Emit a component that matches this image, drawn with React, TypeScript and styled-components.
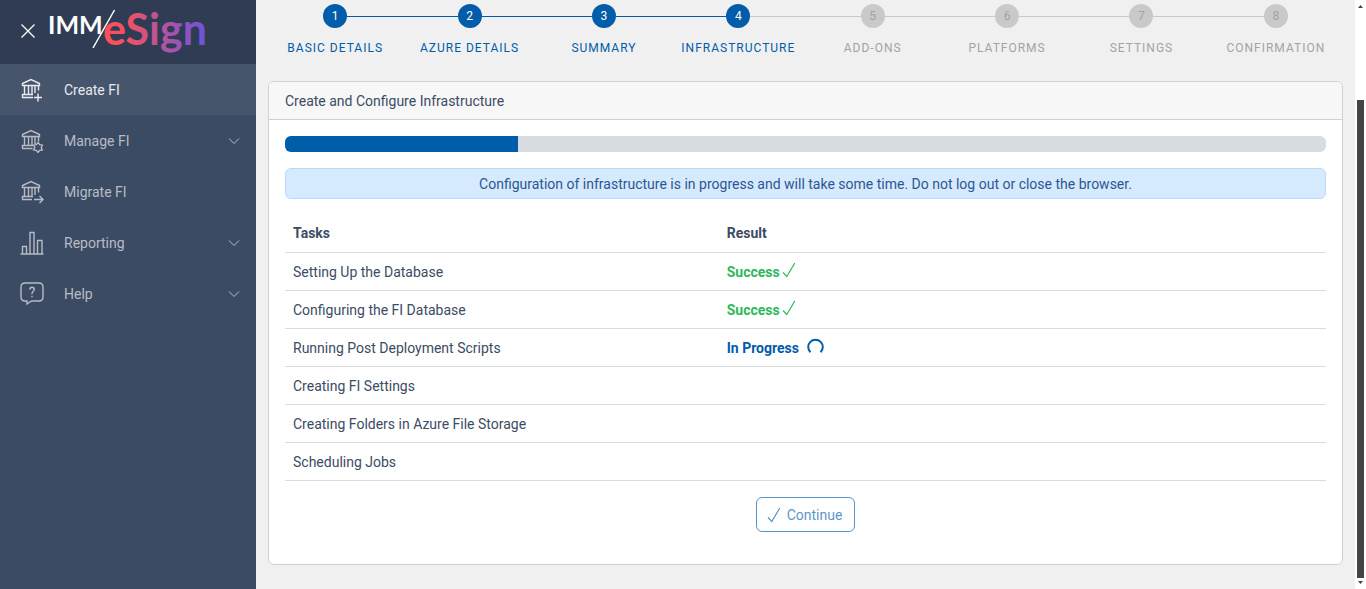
import React from "react";
import styled, { createGlobalStyle, css } from "styled-components";

const GlobalStyle = createGlobalStyle`
  *, *::before, *::after { box-sizing: border-box; }
  body {
    margin: 0;
    background: #f0f0f0;
    color: #3c4b64;
    font-family: Roboto, "Liberation Sans", sans-serif;
    font-size: 14px;
    line-height: 21px;
  }
`;

const Page = styled.div`
  display: flex;
  min-height: 100vh;
`;

const Sidebar = styled.aside`
  flex: 0 0 256px;
  background: #3c4b64;
`;

const Brand = styled.header`
  display: flex;
  align-items: center;
  gap: 12px;
  height: 64px;
  padding-left: 20px;
  background: #303c54;
`;

const CloseButton = styled.button`
  display: flex;
  padding: 0 0 2px;
  border: 0;
  background: none;
  color: #fff;
`;

const Logo = styled.a`
  display: flex;
  text-decoration: none;
`;

const NavItem = styled.a<{ $active?: boolean }>`
  display: flex;
  align-items: center;
  gap: 20px;
  height: 51px;
  padding: 0 16px 0 20px;
  color: ${(p) => (p.$active ? "#e9ebee" : "#b7bcc5")};
  background: ${(p) => (p.$active ? "#46546c" : "transparent")};
  text-decoration: none;
`;

const NavLabel = styled.span`
  flex: 1;
  padding-top: 2px;
`;

const Main = styled.main`
  flex: 1;
  min-width: 0;
  padding: 4px 12px 24px;
`;

const Steps = styled.ol`
  display: flex;
  margin: 0 0 22px;
  padding: 0;
  list-style: none;
`;

const Step = styled.li<{ $done: boolean; $first: boolean }>`
  flex: 1 1 0;
  display: grid;
  grid-template-columns: 1fr 24px 1fr;
  align-items: center;
  row-gap: 10px;
  color: ${(p) => (p.$done ? "#015ca9" : "#a3a3a3")};

  &::before,
  &::after {
    content: "";
    grid-row: 1;
    height: 1px;
    background: ${(p) => (p.$done ? "#015ca9" : "#c9c9c9")};
  }
  &::before {
    grid-column: 1;
    ${(p) => p.$first && css`visibility: hidden;`}
  }
  &::after {
    grid-column: 3;
  }
  &[aria-current="step"]::after {
    background: #c9c9c9;
  }
  &:last-child::after {
    visibility: hidden;
  }
`;

const StepNumber = styled.span<{ $done: boolean }>`
  grid-row: 1;
  grid-column: 2;
  height: 24px;
  border-radius: 50%;
  background: ${(p) => (p.$done ? "#015ca9" : "#c9c9c9")};
  color: ${(p) => (p.$done ? "#fff" : "#a3a3a3")};
  font-size: 12px;
  line-height: 24px;
  text-align: center;
`;

const StepLabel = styled.span`
  grid-row: 2;
  grid-column: 1 / -1;
  font-size: 12px;
  letter-spacing: 1px;
  text-align: center;
  text-transform: uppercase;
  white-space: nowrap;
`;

const Card = styled.section`
  border: 1px solid #ced2d8;
  border-radius: 6px;
  background: #fff;
`;

const CardTitle = styled.h1`
  margin: 0;
  padding: 9px 16px 7px;
  border-bottom: 1px solid #ced2d8;
  border-radius: 5px 5px 0 0;
  background: #f7f7f7;
  font-size: 14px;
  font-weight: 400;
`;

const CardBody = styled.div`
  padding: 16px 16px 32px;
`;

const Track = styled.div`
  height: 16px;
  overflow: hidden;
  border-radius: 6px;
  background: #d8dbe0;
`;

const Fill = styled.div`
  height: 100%;
  background: #015ca9;
`;

const Notice = styled.p`
  margin: 16px 0;
  padding: 5px 16px 3px;
  border: 1px solid #b8daff;
  border-radius: 6px;
  background: #d6eaff;
  color: #2c5691;
  text-align: center;
`;

const Table = styled.table`
  width: 100%;
  border-collapse: separate;
  border-spacing: 0;
  table-layout: fixed;
`;

const cell = css`
  height: 38px;
  border-bottom: 1px solid #d8dbe0;
  text-align: left;
`;

const HeadCell = styled.th`
  ${cell}
  padding: 0 8px;
  font-weight: 700;
  &:first-child { width: calc(100% * 5 / 12); }
`;

const Cell = styled.td`
  ${cell}
  padding: 2px 8px 0;
`;

const Status = styled.span<{ $running?: boolean }>`
  display: flex;
  align-items: flex-start;
  gap: ${(p) => (p.$running ? "8px" : "2px")};
  color: ${(p) => (p.$running ? "#015ca9" : "#2eb85c")};
  font-weight: 700;
`;

const Actions = styled.div`
  display: flex;
  justify-content: center;
  padding-top: 16px;
`;

const ContinueButton = styled.button`
  display: flex;
  align-items: center;
  gap: 6px;
  height: 35px;
  padding: 1px 12px 0 10px;
  border: 1px solid #015ca9;
  border-radius: 6px;
  background: #fff;
  color: #015ca9;
  font: inherit;
  opacity: 0.65;
`;

const ScrollBar = styled.div`
  display: flex;
  flex: 0 0 11px;
  flex-direction: column;
  align-items: center;
  justify-content: space-between;
  padding: 5px 0;
  background: #fff;
  color: #444;
`;

const ScrollThumb = styled.div`
  width: 7px;
  flex: 1;
  margin: 92px 0 3px;
  background: #444;
`;

const Check = () => (
  <svg width="14" height="16" viewBox="0 0 14 16" fill="none" stroke="currentColor" strokeWidth="1.2" aria-hidden="true">
    <path d="M1 10.5 4.8 14.5 12.8 1" />
  </svg>
);

const Spinner = () => (
  <svg width="17" height="17" viewBox="0 0 17 17" fill="none" stroke="currentColor" strokeWidth="2" aria-hidden="true">
    <path d="M3.4 14.2A7.3 7.3 0 1 1 13.6 14.2" />
  </svg>
);

const Chevron = () => (
  <svg width="12" height="8" viewBox="0 0 12 8" fill="none" stroke="currentColor" aria-hidden="true">
    <path d="M1 1.5 6 6.5 11 1.5" />
  </svg>
);

type IconName = "create" | "manage" | "migrate" | "reporting" | "help";

const BankShape = () => (
  <path d="M2.5 7.5V5.5L11 1.5 19.5 5.5V7.5ZM4.5 7.5V16.5M8.500 7.5V16.5M12 7.5V16.5M15 7.5V15M18.500 7.5V12.5M2.5 19.5V16.5H13" />
);

const NavIcon = ({ name }: { name: IconName }) => (
  <svg width="24" height="24" viewBox="0 0 24 24" fill="none" stroke="currentColor" strokeWidth="1.4" aria-hidden="true">
    {name === "create" && (
      <>
        <BankShape />
        <path d="M2 19.5H13M14 19.5H22M18 15.500V23.5" />
      </>
    )}
    {name === "manage" && (
      <>
        <BankShape />
        <path d="M2 19.5H12.5" />
        <path d="M18 13.5 19.7 15.6 22.3 16 21.3 18.5 22.3 21 19.7 21.4 18 23.5 16.3 21.4 13.7 21 14.7 18.5 13.7 16 16.3 15.6Z" />
      </>
    )}
    {name === "migrate" && (
      <>
        <BankShape />
        <path d="M2 19.5H12M14 19.5H23M19.5 16 23 19.5 19.5 23" />
      </>
    )}
    {name === "reporting" && (
      <path d="M0.5 23H23.5M2.5 23V15.5H6.5V23M10 23V1.5H14V23M17.5 23V9.5H22V23" />
    )}
    {name === "help" && (
      <>
        <path d="M5 1H19Q23 1 23 5V15Q23 19 19 19H11.5L7 22V19H5Q1 19 1 15V5Q1 1 5 1Z" />
        <path d="M9.8 7.5Q9.9 5.2 12 5.2 14.2 5.3 14.2 7.3 14.2 8.7 13 9.5 12 10.2 12 12M12 13.8V15.2" />
      </>
    )}
  </svg>
);

const BrandMark = () => (
  <svg width="176" height="64" viewBox="0 0 176 64" role="img" aria-label="IMM eSign">
    <defs>
      <linearGradient id="brand" gradientUnits="userSpaceOnUse" x1="56" y1="0" x2="158" y2="0">
        <stop offset="0" stopColor="#ff5058" />
        <stop offset="0.25" stopColor="#ee5165" />
        <stop offset="0.55" stopColor="#b9549c" />
        <stop offset="1" stopColor="#6a54dc" />
      </linearGradient>
    </defs>
    <text x="0" y="34" fill="#fff" fontFamily="Lato, sans-serif" fontWeight="700" fontSize="25">IMM</text>
    <path d="M45 48 66.500 10" stroke="#fff" strokeWidth="1.5" />
    <text x="55" y="45" fill="url(#brand)" fontFamily="Lato, sans-serif" fontWeight="700" fontSize="43">eSign</text>
  </svg>
);

const navItems: { label: string; icon: IconName; expandable?: boolean }[] = [
  { label: "Create FI", icon: "create" },
  { label: "Manage FI", icon: "manage", expandable: true },
  { label: "Migrate FI", icon: "migrate" },
  { label: "Reporting", icon: "reporting", expandable: true },
  { label: "Help", icon: "help", expandable: true },
];

const steps = [
  "Basic Details",
  "Azure Details",
  "Summary",
  "Infrastructure",
  "Add-ons",
  "Platforms",
  "Settings",
  "Confirmation",
];
const currentStep = 4;

const tasks: { name: string; status?: "success" | "running" }[] = [
  { name: "Setting Up the Database", status: "success" },
  { name: "Configuring the FI Database", status: "success" },
  { name: "Running Post Deployment Scripts", status: "running" },
  { name: "Creating FI Settings" },
  { name: "Creating Folders in Azure File Storage" },
  { name: "Scheduling Jobs" },
];

const progress = 22.4;

export default function App() {
  return (
    <>
      <GlobalStyle />
      <Page>
        <Sidebar>
          <Brand>
            <CloseButton type="button" aria-label="Close menu">
              <svg width="16" height="16" viewBox="0 0 16 16" stroke="currentColor" strokeWidth="1.3" aria-hidden="true">
                <path d="M1.5 1.5 14.5 14.5M14.5 1.5 1.5 14.5" />
              </svg>
            </CloseButton>
            <Logo href="#home">
              <BrandMark />
            </Logo>
          </Brand>
          <nav>
            {navItems.map((item, i) => (
              <NavItem key={item.label} href={`#${item.icon}`} $active={i === 0}>
                <NavIcon name={item.icon} />
                <NavLabel>{item.label}</NavLabel>
                {item.expandable && <Chevron />}
              </NavItem>
            ))}
          </nav>
        </Sidebar>
        <Main>
          <Steps>
            {steps.map((label, i) => (
              <Step
                key={label}
                $done={i < currentStep}
                $first={i === 0}
                aria-current={i === currentStep - 1 ? "step" : undefined}
              >
                <StepNumber $done={i < currentStep}>{i + 1}</StepNumber>
                <StepLabel>{label}</StepLabel>
              </Step>
            ))}
          </Steps>
          <Card>
            <CardTitle>Create and Configure Infrastructure</CardTitle>
            <CardBody>
              <Track role="progressbar" aria-label="Configuration progress" aria-valuenow={progress} aria-valuemin={0} aria-valuemax={100}>
                <Fill style={{ width: `${progress}%` }} />
              </Track>
              <Notice>
                Configuration of infrastructure is in progress and will take some time. Do not log out or close the browser.
              </Notice>
              <Table>
                <thead>
                  <tr>
                    <HeadCell scope="col">Tasks</HeadCell>
                    <HeadCell scope="col">Result</HeadCell>
                  </tr>
                </thead>
                <tbody>
                  {tasks.map((task) => (
                    <tr key={task.name}>
                      <Cell>{task.name}</Cell>
                      <Cell>
                        {task.status === "success" && (
                          <Status>
                            Success
                            <Check />
                          </Status>
                        )}
                        {task.status === "running" && (
                          <Status $running>
                            In Progress
                            <Spinner />
                          </Status>
                        )}
                      </Cell>
                    </tr>
                  ))}
                </tbody>
              </Table>
              <Actions>
                <ContinueButton type="button" disabled>
                  <Check />
                  Continue
                </ContinueButton>
              </Actions>
            </CardBody>
          </Card>
        </Main>
        <ScrollBar aria-hidden="true">
          <svg width="5" height="3" viewBox="0 0 5 3" fill="currentColor">
            <path d="M0 3 2.5 0 5 3Z" />
          </svg>
          <ScrollThumb />
          <svg width="5" height="3" viewBox="0 0 5 3" fill="currentColor">
            <path d="M0 0H5L2.5 3Z" />
          </svg>
        </ScrollBar>
      </Page>
    </>
  );
}
